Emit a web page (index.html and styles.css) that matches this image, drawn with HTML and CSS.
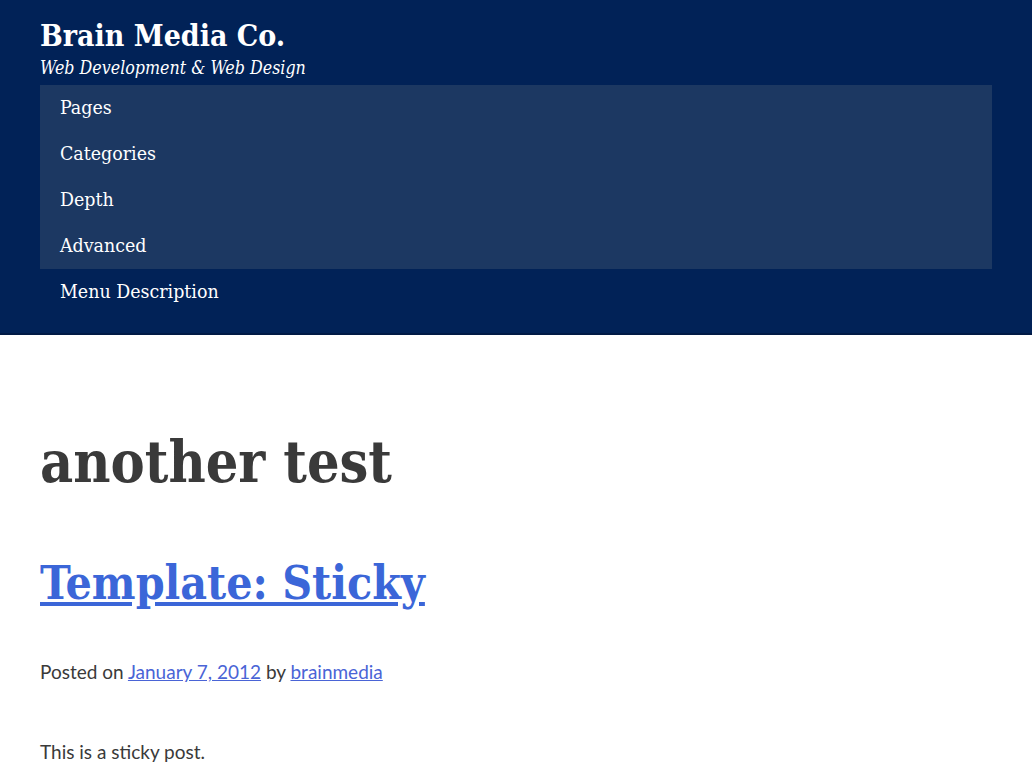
FILE: index.html
```html
<!DOCTYPE html>
<html lang="en">
<head>
  <meta charset="UTF-8" />
  <meta name="viewport" content="width=device-width, initial-scale=1.0"/>
  <title>another test - Brain Media Co.</title>
  <link rel="stylesheet" href="styles.css">
</head>
<body>
<header class="site-header">
  <div class="site-branding">
    <p class="site-title"><a href="#">Brain Media Co.</a></p>
    <p class="site-description">Web Development &amp; Web Design</p>
  </div>
  <nav class="main-navigation">
    <ul class="menu">
      <li><a href="#">Pages</a></li>
      <li><a href="#">Categories</a></li>
      <li><a href="#">Depth</a></li>
      <li><a href="#">Advanced</a></li>
    </ul>
    <ul class="menu menu-secondary">
      <li><a href="#">Menu Description</a></li>
    </ul>
  </nav>
</header>

<main class="site-main">
  <h1 class="page-title">another test</h1>
  <article class="post">
    <h2 class="entry-title"><a href="#">Template: Sticky</a></h2>
    <div class="entry-meta">
      Posted on <a href="#">January 7, 2012</a> by <a href="#">brainmedia</a>
    </div>
    <div class="entry-content">
      <p>This is a sticky post.</p>
    </div>
  </article>
</main>
</body>
</html>
```

FILE: styles.css
```css
body {
  margin: 0;
  padding: 0;
  font-family: 'Lato', sans-serif;
  font-size: 19px;
  color: #3a3a3a;
  background-color: #fff;
}

.site-header {
  background-color: #012257;
  border-bottom: 2px solid #001a45;
  padding: 16px 40px 18px;
}

.site-title,
.site-description,
.menu li a,
.page-title,
.entry-title {
  font-family: 'DejaVu Serif Condensed', 'DejaVu Serif', serif;
  font-stretch: condensed;
}

.site-title {
  margin: 0;
  font-size: 30px;
  font-weight: bold;
  line-height: 40px;
}

.site-title a {
  color: #fff;
  text-decoration: none;
}

.site-description {
  margin: 0;
  font-style: italic;
  font-size: 17.7px;
  line-height: 24px;
  color: #fff;
}

.main-navigation {
  margin-top: 5px;
}

.menu {
  list-style: none;
  margin: 0;
  padding: 0;
  background-color: #1c3862;
}

.menu-secondary {
  background-color: transparent;
}

.menu li a {
  display: block;
  padding: 0 20px;
  line-height: 45px;
  padding-bottom: 1px;
  font-size: 19.4px;
  color: #fff;
  text-decoration: none;
}

.site-main {
  padding: 82px 40px 0;
}

.page-title {
  margin: 0;
  font-size: 57px;
  font-weight: bold;
  line-height: 90px;
  color: #3a3a3a;
}

.entry-title {
  margin: 46px 0 0;
  font-size: 46px;
  font-weight: bold;
  line-height: 60px;
}

.entry-title a {
  color: #3b66d8;
}

.entry-meta {
  margin-top: 44px;
  line-height: 30px;
}

.entry-meta a {
  color: #4a64d6;
}

.entry-content p {
  margin: 50px 0 0;
  line-height: 30px;
}
```
